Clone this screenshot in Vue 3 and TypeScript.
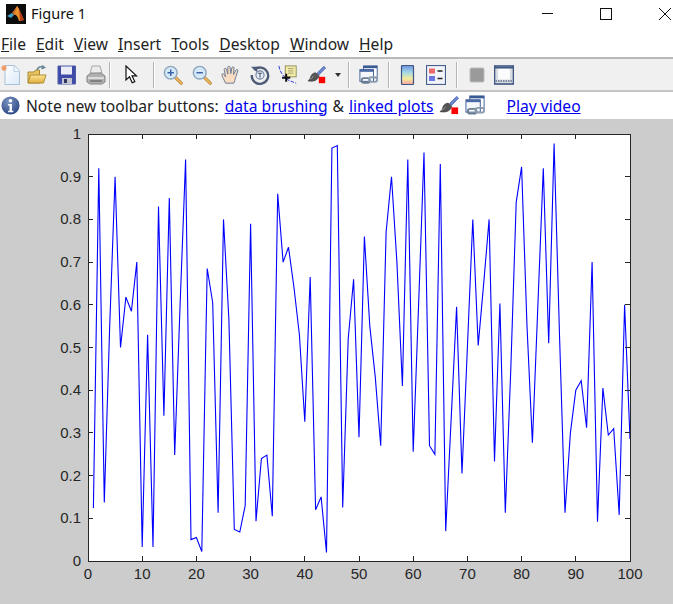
<template>
  <div class="window">
    <svg class="defs" aria-hidden="true">
      <defs>
        <linearGradient id="bar-grad" x1="0" y1="0" x2="0" y2="1">
          <stop offset="0" stop-color="#6f8fe0" />
          <stop offset="0.35" stop-color="#9fd8e8" />
          <stop offset="0.7" stop-color="#f5ec9a" />
          <stop offset="1" stop-color="#f0a0a0" />
        </linearGradient>
        <linearGradient id="page-grad" x1="0" y1="0" x2="1" y2="1">
          <stop offset="0" stop-color="#ffffff" />
          <stop offset="1" stop-color="#dbe9f8" />
        </linearGradient>
        <linearGradient id="folder-grad" x1="0" y1="0" x2="0" y2="1">
          <stop offset="0" stop-color="#fbe596" />
          <stop offset="1" stop-color="#e2ae3c" />
        </linearGradient>
        <radialGradient id="info-grad" cx="0.4" cy="0.3" r="0.8">
          <stop offset="0" stop-color="#7d95c4" />
          <stop offset="1" stop-color="#24407f" />
        </radialGradient>
      </defs>
      <symbol id="i-new" viewBox="0 0 20 20">
        <path d="M4 .5h9.500l5 5.500v13.500H4z" fill="url(#page-grad)" stroke="#a9c0da" />
        <path d="M13 .5v6h5.500" fill="#eef4fb" stroke="#bdd0e4" />
        <path d="M0 3h6M3 0v6M1 1l4 4M5 1L1 5" stroke="#ee9a62" stroke-width="1.200" />
      </symbol>
      <symbol id="i-open" viewBox="0 0 20 20">
        <path d="M1 18V7h6l1.500-2h4v13z" fill="#e8c45e" stroke="#a98a3a" />
        <path d="M1 18l2.500-8H19l-2.500 8z" fill="url(#folder-grad)" stroke="#b08c36" />
        <path d="M10 5C11 2 14 1 16 2.500M15 .5l2.500 2-3 1.200" fill="none" stroke="#6d8596" stroke-width="1.500" />
      </symbol>
      <symbol id="i-save" viewBox="0 0 20 20">
        <path d="M1 1h17.500v18H1z" fill="#3f4aa8" stroke="#4c5fa6" />
        <rect x="4" y="1.500" width="11" height="8" fill="#e9ecf6" />
        <rect x="5" y="13" width="10" height="6" fill="#c3c6d2" />
        <rect x="7" y="14" width="3" height="4" fill="#2e3460" />
      </symbol>
      <symbol id="i-print" viewBox="0 0 20 20">
        <path d="M4 9L6 1h8l2 7z" fill="#ececec" stroke="#a8a8a8" />
        <path d="M1 11l4-3h10l4 3v6l-3 2H4l-3-2z" fill="#b0b0b0" stroke="#888" />
        <path d="M2 12h16v2H2z" fill="#dcdcdc" />
        <path d="M4 16h12" stroke="#707070" stroke-width="1.500" />
      </symbol>
      <symbol id="i-arrow" viewBox="0 0 20 20">
        <path d="M5 1v14l3.500-3.200 2.700 6 2.600-1.200-2.800-5.800H15.500z" fill="#fff" stroke="#111" stroke-width="1.200" />
      </symbol>
      <symbol id="i-zoom-in" viewBox="0 0 22 22">
        <path d="M13 13l7 7" stroke="#b88a3c" stroke-width="3.600" stroke-linecap="round" />
        <path d="M13 13l7 7" stroke="#f0b45c" stroke-width="1.800" stroke-linecap="round" />
        <circle cx="8.500" cy="8.500" r="7" fill="#d5e8f7" stroke="#8ea6bd" stroke-width="1.600" />
        <path d="M5 8.500h7M8.500 5v7" stroke="#3a62a8" stroke-width="1.600" />
      </symbol>
      <symbol id="i-zoom-out" viewBox="0 0 22 22">
        <path d="M13 13l7 7" stroke="#b88a3c" stroke-width="3.600" stroke-linecap="round" />
        <path d="M13 13l7 7" stroke="#f0b45c" stroke-width="1.800" stroke-linecap="round" />
        <circle cx="8.500" cy="8.500" r="7" fill="#d5e8f7" stroke="#8ea6bd" stroke-width="1.600" />
        <path d="M5 8.500h7" stroke="#3a62a8" stroke-width="1.600" />
      </symbol>
      <symbol id="i-hand" viewBox="0 0 22 22">
        <path d="M5 20C4 17 1 13 1 10.500c0-1 1.500-1.500 2.500 0L5 13 3.500 5C3.300 3.500 5.500 3 6 4.500L7.500 10 7.500 2.500C7.500 1 9.800 1 10 2.500L10.800 9.500 12 3c.3-1.500 2.400-1.200 2.300.3L13.800 10.500 16.500 5.500c.7-1.300 2.600-.5 2 1L16 14c-.5 2.500-1 4-2 6z" fill="#f8dcc4" stroke="#6f7f94" stroke-width="1.100" stroke-linejoin="round" />
      </symbol>
      <symbol id="i-rotate" viewBox="0 0 22 22">
        <path d="M4.500 5.500A9 9 0 1 1 2 11" fill="none" stroke="#4d5a78" stroke-width="2.600" />
        <path d="M1 2h7v6z" fill="#4d5a78" />
        <circle cx="11" cy="11" r="4.500" fill="#e8eef5" stroke="#6f7f9f" stroke-width="1.200" />
        <path d="M8.500 9h5M11 9v5" stroke="#4d5a78" stroke-width="1.200" />
      </symbol>
      <symbol id="i-cursor" viewBox="0 0 22 22">
        <path d="M1 1c1 7 5 12 11 16 3 1 5 2 8 3" fill="none" stroke="#2f3fd0" stroke-width="1.100" stroke-dasharray="4 1.500" />
        <rect x="8" y="1" width="12" height="12" fill="#f3eba8" stroke="#8b8b5a" />
        <path d="M11 4h6M11 6.500h6M11 9h6" stroke="#a09a6a" />
        <path d="M9 9.500v9M4.500 14h9" stroke="#111" stroke-width="2.200" />
      </symbol>
      <symbol id="i-brush" viewBox="0 0 22 22">
        <path d="M11 9L18.500 1.500l2 1.800L13 11z" fill="#6d89cf" stroke="#3c5aa8" stroke-width=".8" />
        <path d="M9.500 8.500l4 3.500c-1 3-3.500 5-6 5.500-2.500.5-5 .5-6.500-.2 2-.8 2.500-2.500 3-4.300.5-2 2.500-4.500 5.500-4.500z" fill="#555" stroke="#333" stroke-width=".6" />
        <path d="M3.500 15.500c1.500-.3 3-1.700 3.500-3.500" stroke="#999" fill="none" />
        <rect x="13" y="13" width="7" height="7" fill="#ff0000" />
      </symbol>
      <symbol id="i-link" viewBox="0 0 22 22">
        <rect x="5" y="1" width="15" height="13" fill="#fff" stroke="#3a5a94" />
        <path d="M5 1h15v2.500H5z" fill="#3a5a94" />
        <rect x="1" y="5" width="15" height="13" fill="#f4f7fb" stroke="#3a5a94" />
        <path d="M1 5h15v2.500H1z" fill="#4a6aa4" />
        <rect x="3" y="14.500" width="9" height="5" rx="2.500" fill="none" stroke="#6b7d90" stroke-width="2" />
        <rect x="11" y="13.500" width="9" height="5" rx="2.500" fill="none" stroke="#8c9cae" stroke-width="2" />
      </symbol>
      <symbol id="i-colorbar" viewBox="0 0 20 20">
        <rect x="3.500" y="0.500" width="12" height="19" rx="1" fill="url(#bar-grad)" stroke="#3f5682" stroke-width="1.200" />
      </symbol>
      <symbol id="i-legend" viewBox="0 0 20 20">
        <rect x="0.500" y="0.500" width="19" height="19" fill="#f1f4fa" stroke="#45608f" stroke-width="1.200" />
        <rect x="3" y="3.500" width="6" height="5" fill="#e96a6a" />
        <rect x="3" y="11" width="6" height="5" fill="#6a78e0" />
        <path d="M11.500 6h5M11.500 13.500h5" stroke="#222" stroke-width="1.300" />
      </symbol>
      <symbol id="i-plain" viewBox="0 0 20 20">
        <rect x="3" y="3" width="14" height="14" rx="1.500" fill="#9a9a9a" stroke="#bdbdbd" />
      </symbol>
      <symbol id="i-film" viewBox="0 0 20 20">
        <rect x="0.500" y="1" width="19" height="18" fill="#d8dce2" stroke="#3f5682" stroke-width="1.600" />
        <rect x="4" y="3.500" width="12" height="11" fill="#fbfbfb" />
        <path d="M1 2h18v1.500H1z" fill="#3f5682" />
        <path d="M1.500 16h17" stroke="#7c8aa0" stroke-width="2" stroke-dasharray="1.500 1" />
      </symbol>
    </svg>

    <header class="titlebar">
      <svg class="app-logo" viewBox="0 0 20 20" aria-hidden="true">
        <rect width="20" height="20" fill="#0c0c0c" />
        <path d="M1 12l5-3 2 2-3 3z" fill="#3f9fc4" />
        <path d="M6 9l5-7 2 3-5 6z" fill="#c9662c" />
        <path d="M11 2c2 2 5 10 7 14l-5 1c-1-4-3-7-5-6z" fill="#e8902c" />
        <path d="M13 5l5 11-4 1z" fill="#b83c14" />
      </svg>
      <span class="title">Figure 1</span>
      <div class="win-controls" aria-hidden="true">
        <span class="win-min"></span>
        <span class="win-max"></span>
        <svg class="win-close" viewBox="0 0 12 12"><path d="M0 0l12 12M12 0L0 12" stroke="#111" stroke-width="1" fill="none" /></svg>
      </div>
    </header>

    <nav class="menubar">
      <span v-for="m in menus" :key="m" class="menu-item"><u>{{ m[0] }}</u>{{ m.slice(1) }}</span>
    </nav>

    <div class="toolbar">
      <div
        v-for="(t, i) in tools"
        :key="i"
        class="tool"
        :style="{ width: t.w + 'px' }"
      >
        <i v-if="t.kind === 'sep'" class="sep"></i>
        <i v-else-if="t.kind === 'drop'" class="drop"></i>
        <svg v-else class="tool-icon"><use :href="'#i-' + t.kind" /></svg>
      </div>
    </div>

    <div class="notebar">
      <svg class="info" viewBox="0 0 20 20" aria-hidden="true">
        <circle cx="10" cy="10" r="9.500" fill="url(#info-grad)" />
        <circle cx="10" cy="5" r="1.900" fill="#fff" />
        <path d="M7.500 8.500h4v7h1.500v1.500H7.500v-1.500H9V10H7.500z" fill="#fff" />
      </svg>
      <span class="note-text">Note new toolbar buttons:</span>
      <a class="link first">data brushing</a>
      <span class="amp">&amp;</span>
      <a class="link">linked plots</a>
      <svg class="note-icon brush"><use href="#i-brush" /></svg>
      <svg class="note-icon chain"><use href="#i-link" /></svg>
      <a class="link play">Play video</a>
    </div>

    <section class="figure">
      <svg class="plot" viewBox="0 119 673 485">
        <rect :x="left" :y="top" :width="right - left" :height="bottom - top" fill="#fff" />
        <polyline :points="points" fill="none" stroke="#0000ff" stroke-width="1.100" />
        <path :d="ticks" fill="none" stroke="#262626" stroke-width="1" shape-rendering="crispEdges" />
        <rect :x="left" :y="top" :width="right - left" :height="bottom - top" fill="none" stroke="#262626" stroke-width="1" shape-rendering="crispEdges" />
        <text v-for="t in yLabels" :key="t.label" class="tick-text" :x="left - 7" :y="t.y + 5" text-anchor="end">{{ t.label }}</text>
        <text v-for="t in xLabels" :key="t.label" class="tick-text" :x="t.x" y="579" text-anchor="middle">{{ t.label }}</text>
      </svg>
    </section>
  </div>
</template>

<script setup lang="ts">
const menus = ['File', 'Edit', 'View', 'Insert', 'Tools', 'Desktop', 'Window', 'Help']

// slot widths add up to the toolbar positions in the original window
const tools = [
  { kind: 'new', w: 26 },
  { kind: 'open', w: 30 },
  { kind: 'save', w: 29 },
  { kind: 'print', w: 24 },
  { kind: 'sep', w: 11 },
  { kind: 'arrow', w: 33 },
  { kind: 'sep', w: 9 },
  { kind: 'zoom-in', w: 29 },
  { kind: 'zoom-out', w: 29 },
  { kind: 'hand', w: 29 },
  { kind: 'rotate', w: 28 },
  { kind: 'cursor', w: 29 },
  { kind: 'brush', w: 29 },
  { kind: 'drop', w: 13 },
  { kind: 'sep', w: 10 },
  { kind: 'link', w: 30 },
  { kind: 'sep', w: 9 },
  { kind: 'colorbar', w: 28 },
  { kind: 'legend', w: 31 },
  { kind: 'sep', w: 10 },
  { kind: 'plain', w: 27 },
  { kind: 'film', w: 28 },
]

const left = 88
const right = 630
const top = 134
const bottom = 561

// values read off the plotted curve, x = 1..100
const data = [
  0.124, 0.92, 0.137, 0.55, 0.9, 0.5, 0.618, 0.585, 0.7, 0.033,
  0.53, 0.033, 0.83, 0.34, 0.85, 0.248, 0.6, 0.94, 0.05, 0.055,
  0.022, 0.685, 0.605, 0.113, 0.8, 0.565, 0.074, 0.068, 0.13, 0.79,
  0.093, 0.24, 0.248, 0.105, 0.86, 0.7, 0.735, 0.64, 0.53, 0.326,
  0.665, 0.12, 0.15, 0.02, 0.967, 0.973, 0.125, 0.52, 0.66, 0.29,
  0.76, 0.55, 0.43, 0.27, 0.77, 0.9, 0.7, 0.41, 0.94, 0.256,
  0.6, 0.957, 0.27, 0.25, 0.93, 0.07, 0.33, 0.595, 0.205, 0.5,
  0.8, 0.505, 0.65, 0.8, 0.233, 0.603, 0.113, 0.45, 0.84, 0.923,
  0.55, 0.277, 0.6, 0.92, 0.51, 0.978, 0.53, 0.113, 0.3, 0.4,
  0.422, 0.312, 0.7, 0.092, 0.405, 0.295, 0.31, 0.108, 0.6, 0.286,
]

const xPos = (v: number) => left + ((right - left) * v) / 100
const yPos = (v: number) => bottom - (bottom - top) * v

const points = data.map((v, i) => `${xPos(i + 1).toFixed(1)},${yPos(v).toFixed(1)}`).join(' ')

const steps = [0, 1, 2, 3, 4, 5, 6, 7, 8, 9, 10]

const xLabels = steps.map((s) => ({ label: String(s * 10), x: xPos(s * 10) }))
const yLabels = steps.map((s) => ({ label: String(s / 10), y: yPos(s / 10) }))

const ticks = steps
  .map((s) => {
    const x = xPos(s * 10)
    const y = yPos(s / 10)
    return `M${x} ${bottom}v-5M${x} ${top}v5M${left} ${y}h5M${right} ${y}h-5`
  })
  .join('')
</script>

<style>
html,
body {
  margin: 0;
  background: #fff;
}
</style>

<style scoped>
.window {
  display: flex;
  flex-direction: column;
  width: 673px;
  height: 604px;
  overflow: hidden;
  background: #fff;
  color: #1a1a1a;
  font-family: "Noto Sans", "Liberation Sans", sans-serif;
}

.defs {
  position: absolute;
  width: 0;
  height: 0;
}

.titlebar {
  display: flex;
  flex: none;
  align-items: center;
  height: 30px;
  padding-left: 6px;
  box-sizing: border-box;
}

.app-logo {
  width: 20px;
  height: 20px;
  margin-top: -3px;
}

.title {
  margin-left: 5px;
  margin-top: -4px;
  font-size: 14.500px;
  color: #111;
}

.win-controls {
  display: flex;
  align-items: center;
  margin-left: auto;
  margin-top: -3px;
}

.win-min {
  width: 11px;
  height: 1px;
  background: #111;
}

.win-max {
  width: 10px;
  height: 10px;
  margin-left: 47px;
  border: 1px solid #111;
}

.win-close {
  width: 12px;
  height: 12px;
  margin-left: 47px;
  margin-right: 2px;
}

.menubar {
  display: flex;
  flex: none;
  gap: 10px;
  align-items: center;
  height: 27px;
  padding-left: 1px;
  box-sizing: border-box;
  font-size: 15.600px;
  color: #222;
}

.toolbar {
  display: flex;
  flex: none;
  align-items: center;
  height: 35px;
  box-sizing: border-box;
  background: #f0f0f0;
  border-top: 2px solid #b9b9b9;
  border-bottom: 2px solid #c4c4c4;
}

.tool {
  display: flex;
  flex: none;
  align-items: center;
  height: 100%;
}

.tool-icon {
  width: 20px;
  height: 20px;
  margin-left: 1px;
  flex: none;
}

.sep {
  display: block;
  width: 1px;
  height: 26px;
  background: #b4b4b4;
  border-right: 1px solid #fff;
}

.drop {
  display: block;
  width: 0;
  height: 0;
  border-left: 3px solid transparent;
  border-right: 3px solid transparent;
  border-top: 4px solid #333;
}

.notebar {
  display: flex;
  flex: none;
  align-items: center;
  height: 27px;
  font-size: 15.600px;
  color: #222;
}

.info {
  width: 19px;
  height: 19px;
  margin-left: 1px;
  flex: none;
}

.note-text {
  margin-left: 6px;
}

.link {
  color: #0000ee;
  text-decoration: underline;
}

.first {
  margin-left: 6px;
}

.amp {
  margin: 0 5px;
}

.note-icon {
  width: 21px;
  height: 21px;
  flex: none;
}

.brush {
  margin-left: 5px;
}

.chain {
  margin-left: 5px;
}

.play {
  margin-left: 21px;
}

.figure {
  flex: 1;
  min-height: 0;
  background: #cccccc;
}

.plot {
  display: block;
  width: 673px;
  height: 485px;
}

.tick-text {
  fill: #262626;
  font-family: "Liberation Sans", Arial, sans-serif;
  font-size: 15px;
}
</style>
